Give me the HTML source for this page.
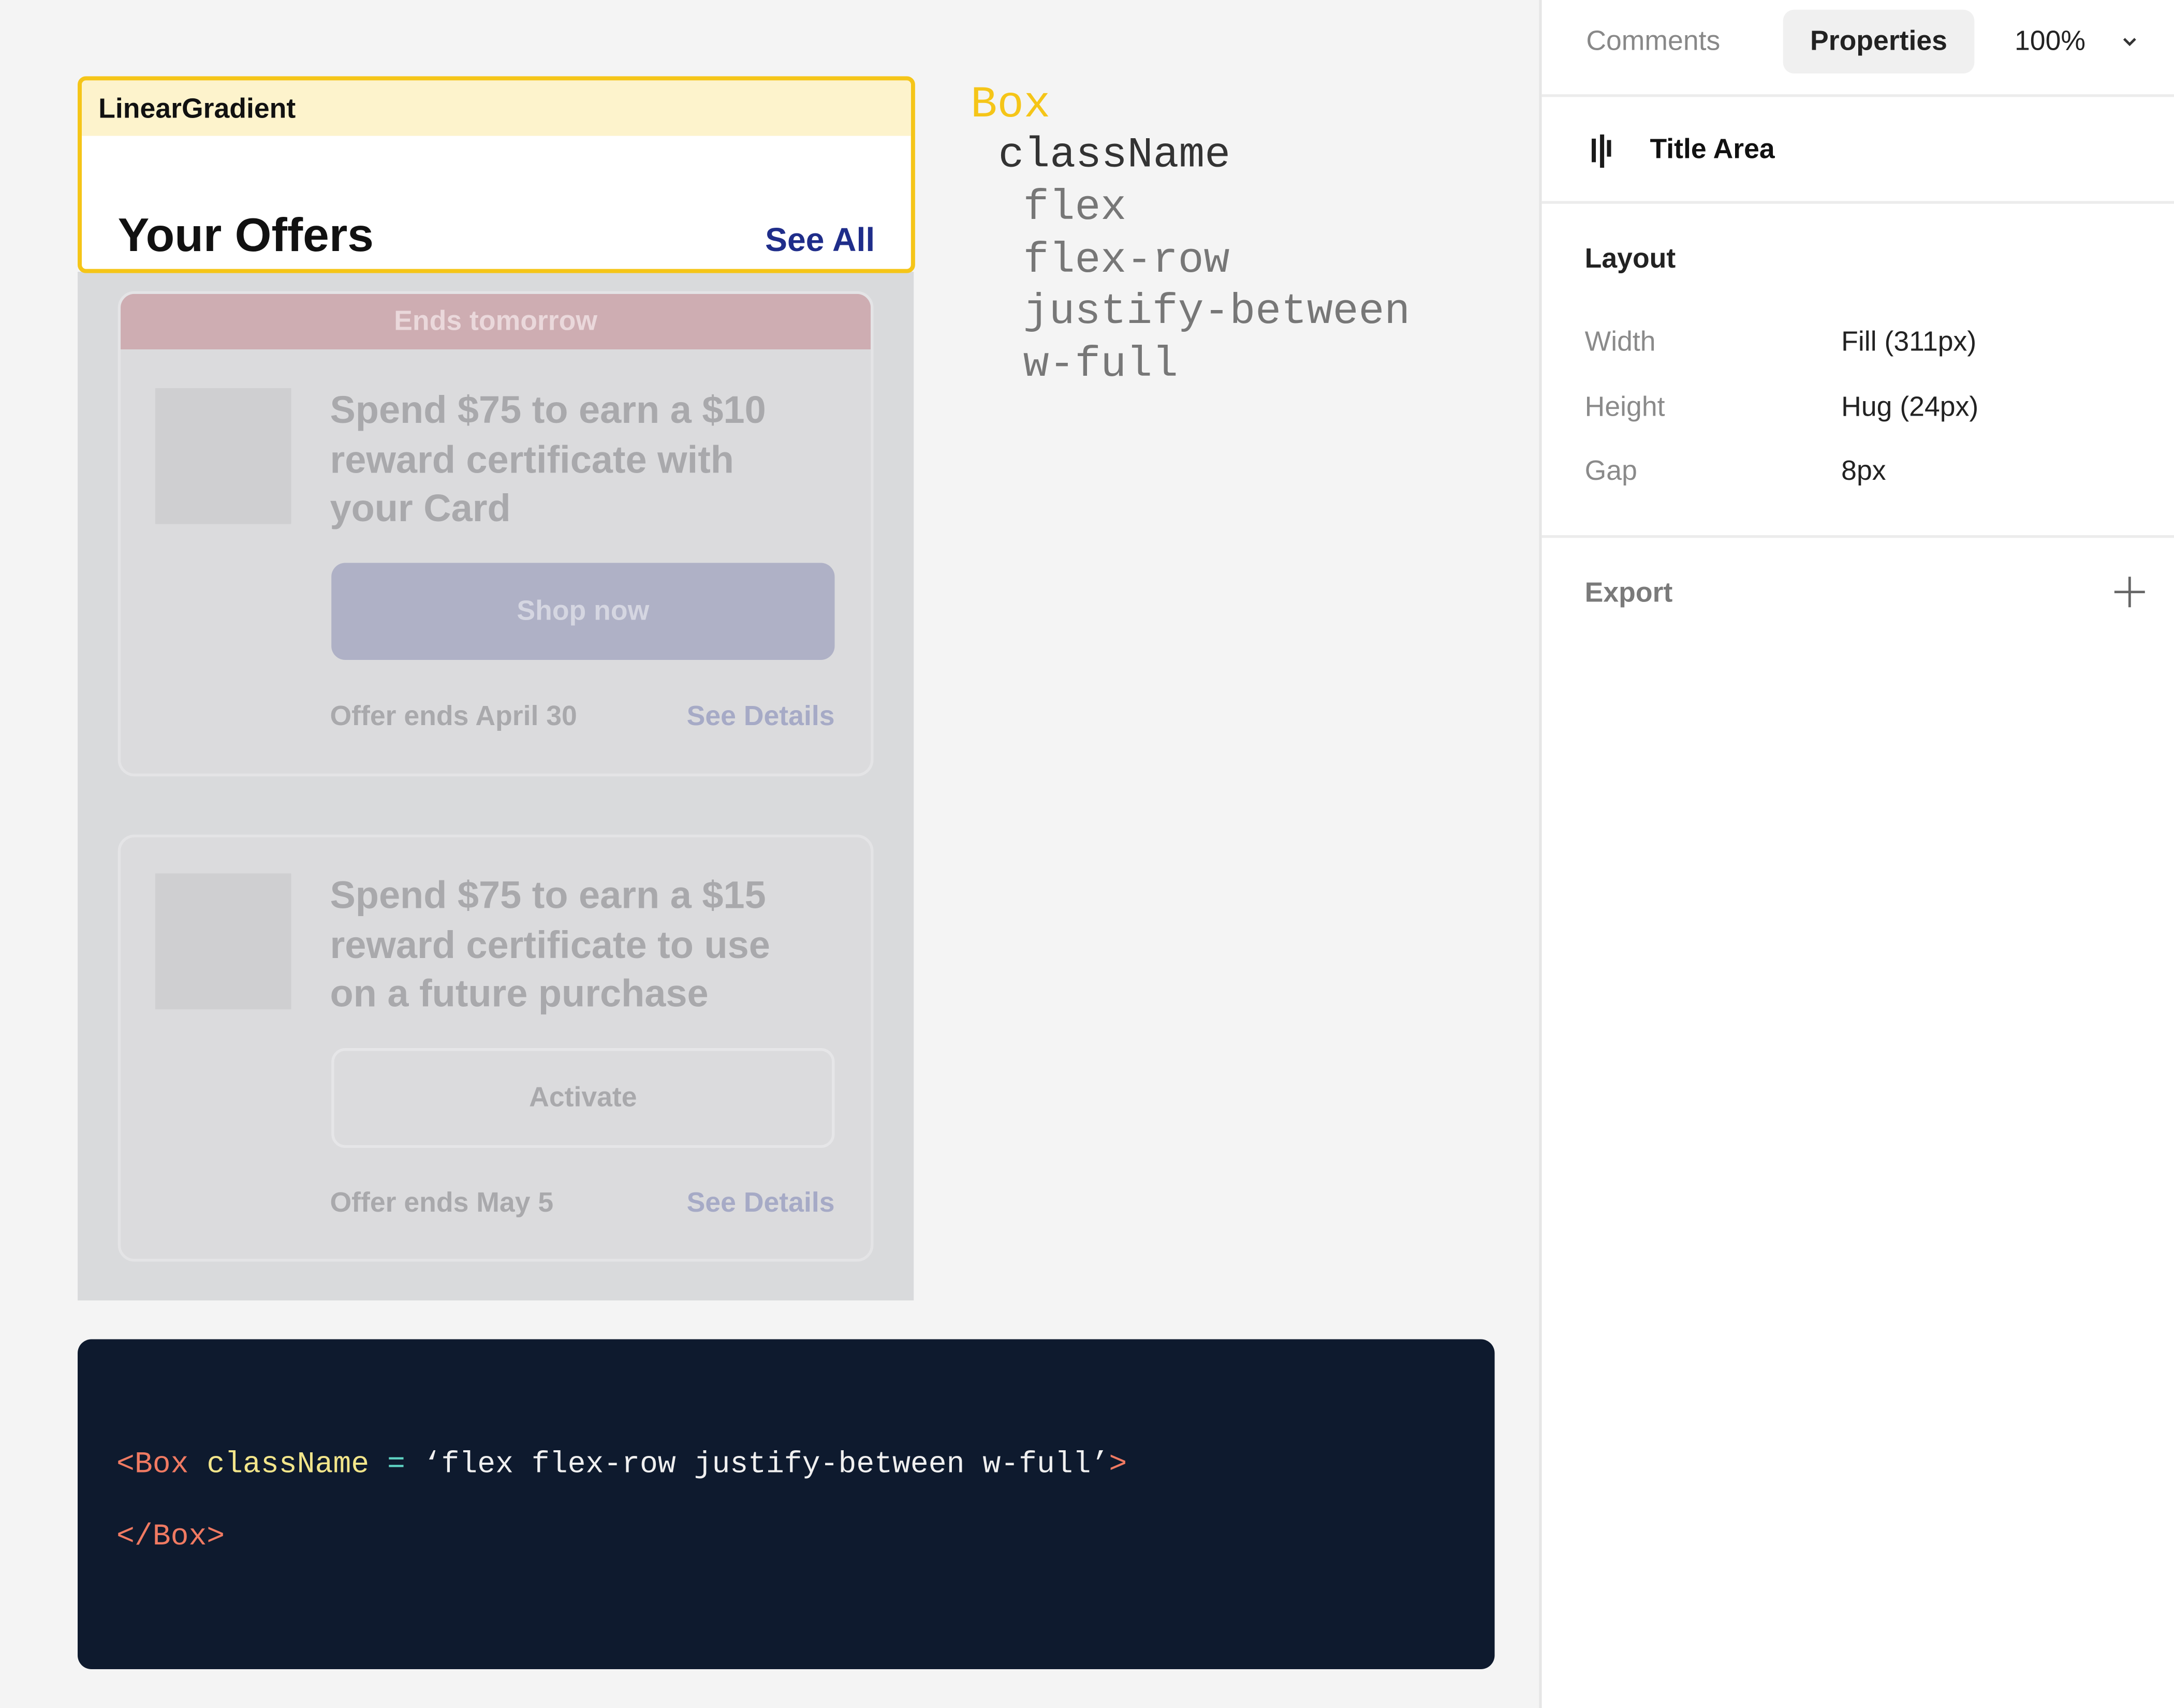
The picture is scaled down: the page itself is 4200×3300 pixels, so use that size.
<!DOCTYPE html>
<html><head><meta charset="utf-8"><style>
*{margin:0;padding:0;box-sizing:border-box}
html,body{width:4200px;height:3300px;overflow:hidden;background:#f4f4f4}
#s{position:absolute;left:0;top:0;width:1568px;height:1232px;transform:scale(2.6786);transform-origin:0 0;font-family:"Liberation Sans",sans-serif}
.a{position:absolute;white-space:nowrap}
.m{font-family:"Liberation Mono",monospace}
.b{font-weight:bold}
</style></head><body><div id="s">
<div class="a" style="left:56px;top:196px;width:603px;height:742px;background:#d9dadc"></div>
<div class="a" style="left:56px;top:55px;width:604px;height:142px;border:3px solid #f5c518;border-radius:6px;background:#fff;overflow:hidden">
 <div class="a" style="left:0;top:0;width:600px;height:40px;background:#fdf3cc"></div>
 <div class="a b" style="left:12px;top:10px;font-size:20px;color:#111">LinearGradient</div>
 <div class="a b" style="left:26px;top:93px;font-size:34px;color:#111">Your Offers</div>
 <div class="a b" style="right:26px;top:102px;font-size:24px;color:#1f2d8a">See All</div>
</div>
<div class="a" style="left:85px;top:210px;width:545px;height:350px;border:2px solid #e4e4e6;border-radius:12px;background:#dbdbdd;overflow:hidden">
 <div class="a b" style="left:0;top:0;width:541px;height:40px;background:#ceadb2;color:#ead8db;font-size:20px;text-align:center;line-height:40px">Ends tomorrow</div>
</div>
<div class="a" style="left:112px;top:280px;width:98px;height:98px;background:#cfcfd1"></div>
<div class="a b" style="left:238px;top:278px;font-size:27.6px;line-height:35.5px;color:#a9a9ac">Spend $75 to earn a $10<br>reward certificate with<br>your Card</div>
<div class="a b" style="left:239px;top:406px;width:363px;height:70px;background:#afb1c6;border-radius:10px;color:#d5d6e1;font-size:20px;text-align:center;line-height:70px">Shop now</div>
<div class="a b" style="left:238px;top:506px;font-size:20px;color:#a9a9ac">Offer ends April 30</div>
<div class="a b" style="right:966px;top:506px;font-size:20px;color:#a6aac6">See Details</div>
<div class="a" style="left:85px;top:602px;width:545px;height:308px;border:2px solid #e4e4e6;border-radius:12px;background:#dbdbdd"></div>
<div class="a" style="left:112px;top:630px;width:98px;height:98px;background:#cfcfd1"></div>
<div class="a b" style="left:238px;top:628px;font-size:27.6px;line-height:35.5px;color:#a9a9ac">Spend $75 to earn a $15<br>reward certificate to use<br>on a future purchase</div>
<div class="a b" style="left:239px;top:756px;width:363px;height:72px;border:2px solid #e6e6e8;border-radius:10px;color:#a9a9ac;font-size:20px;text-align:center;line-height:68px">Activate</div>
<div class="a b" style="left:238px;top:857px;font-size:20px;color:#a9a9ac">Offer ends May 5</div>
<div class="a b" style="right:966px;top:857px;font-size:20px;color:#a6aac6">See Details</div>
<div class="a m" style="left:700px;top:57px;font-size:32px;color:#f5c518">Box</div>
<div class="a m" style="left:720px;top:95px;font-size:31px;color:#333">className</div>
<div class="a m" style="left:738px;top:132px;font-size:31px;line-height:37.5px;color:#777">flex<br>flex-row<br>justify-between<br>w-full</div>
<div class="a m" style="left:56px;top:966px;width:1022px;height:238px;background:#0e1a2e;border-radius:10px;font-size:21.7px">
 <div class="a" style="left:28px;top:78px"><span style="color:#f07a62">&lt;Box</span> <span style="color:#f2e58a">className</span> <span style="color:#5fd4c4">=</span> <span style="color:#f0f0f0">‘flex flex-row justify-between w-full’</span><span style="color:#f07a62">&gt;</span></div>
 <div class="a" style="left:28px;top:130px;color:#f07a62">&lt;/Box&gt;</div>
</div>
<div class="a" style="left:1110px;top:0;width:458px;height:1232px;background:#fff;border-left:2px solid #e6e6e6">
 <div class="a" style="left:0;top:68px;width:458px;height:2px;background:#ececec"></div>
 <div class="a" style="left:32px;top:19px;font-size:20px;color:#888">Comments</div>
 <div class="a" style="left:174px;top:7px;width:138px;height:46px;background:#f0f0f0;border-radius:8px;font-size:20px;color:#222;text-align:center;line-height:46px;font-weight:bold">Properties</div>
 <div class="a" style="left:341px;top:19px;font-size:20px;color:#222">100%</div>
 <svg class="a" style="left:418px;top:24px" width="12" height="12" viewBox="0 0 12 12"><path d="M2 4l4 4 4-4" fill="none" stroke="#333" stroke-width="1.8"/></svg>
 <div class="a" style="left:36px;top:100px;width:3px;height:17px;background:#1a1a1a"></div>
 <div class="a" style="left:42px;top:97px;width:3px;height:24px;background:#1a1a1a"></div>
 <div class="a" style="left:47px;top:101px;width:3px;height:12px;background:#1a1a1a"></div>
 <div class="a b" style="left:78px;top:97px;font-size:20px;color:#111">Title Area</div>
 <div class="a" style="left:0;top:145px;width:458px;height:2px;background:#ececec"></div>
 <div class="a b" style="left:31px;top:176px;font-size:20px;color:#222">Layout</div>
 <div class="a" style="left:31px;top:224px;font-size:20px;line-height:46.5px;color:#8a8a8a">Width<br>Height<br>Gap</div>
 <div class="a" style="left:216px;top:224px;font-size:20px;line-height:46.5px;color:#222">Fill (311px)<br>Hug (24px)<br>8px</div>
 <div class="a" style="left:0;top:386px;width:458px;height:2px;background:#ececec"></div>
 <div class="a b" style="left:31px;top:417px;font-size:20px;color:#7a7a7a">Export</div>
 <svg class="a" style="left:412px;top:415px" width="24" height="24" viewBox="0 0 24 24"><path d="M12 1v22M1 12h22" stroke="#666" stroke-width="1.8"/></svg>
</div>
</div></body></html>
